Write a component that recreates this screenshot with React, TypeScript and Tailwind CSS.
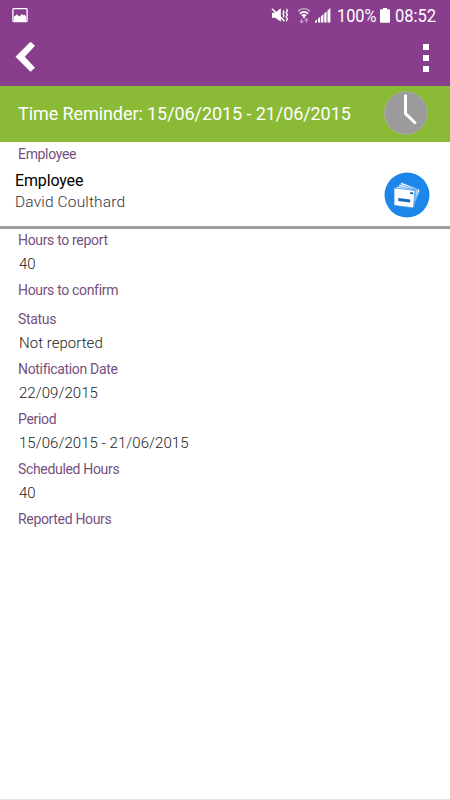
interface Field {
  label: string;
  value?: string;
}

const fields: Field[] = [
  { label: "Hours to report", value: "40" },
  { label: "Hours to confirm" },
  { label: "Status", value: "Not reported" },
  { label: "Notification Date", value: "22/09/2015" },
  { label: "Period", value: "15/06/2015 - 21/06/2015" },
  { label: "Scheduled Hours", value: "40" },
  { label: "Reported Hours" },
];

function StatusBar() {
  return (
    <div className="flex h-8 items-center text-white">
      <svg className="ml-3 h-4 w-4" viewBox="0 0 16 16" fill="none">
        <rect x=".9" y=".7" width="14.2" height="12.8" rx="0.8" stroke="currentColor" strokeWidth="1.3" />
        <path d="M2 8.5 3.6 7.5l1.2-1.2 2.4 2.2L10.4 6l1.2 1.4 1.1-.6L14 8.5V13H2z" fill="currentColor" />
      </svg>
      <svg className="ml-[243px] h-4 w-[18px]" viewBox="0 0 18 16" fill="none" stroke="currentColor">
        <path d="M1 4.7h3.2L9.8.3v13.4l-5.6-4H1z" fill="currentColor" stroke="none" />
        <path d="M1 .8 13.5 13.3" strokeWidth="1.6" />
        <path d="m12 2.3 1 1.7-1 1.9 1 1.9-1 1.7M15.5.8l1 2-1.4 2 1.4 2-1.4 2 1.4 2-1.2 2.5" strokeWidth="1.3" />
      </svg>
      <svg className="ml-2 h-4 w-[14px]" viewBox="0 0 14 16" fill="none" stroke="currentColor">
        <path d="M1 3.2C4.6.1 9.4.1 13 3.2" strokeWidth="1.3" opacity=".65" />
        <path d="M2.8 5.7c2.6-2.2 5.8-2.2 8.4 0M4.8 7.8c1.4-1.1 3-1.1 4.4 0" strokeWidth="1.6" />
        <circle cx="7" cy="9.2" r="1.1" fill="currentColor" stroke="none" />
        <path d="M4.6 14.7v-4M2.8 12.8l1.8 1.9 1.8-1.9M9.4 14.7v-4M7.6 12.6l1.8-1.9 1.8 1.9" strokeWidth="1.2" opacity=".5" />
      </svg>
      <svg className="ml-[4px] h-4 w-4" viewBox="0 0 16 16" fill="currentColor">
        <path d="M0 14.5V13l2-1.5v3zM3 14.5v-4l2.2-1.6v5.6zM6 14.5V8.2l2.4-1.9v8.2zM9.2 14.5v-9l2.4-1.9v10.9zM12.5 14.5V2.4L15.4.1v14.4z" />
      </svg>
      <span className="ml-[6px] w-[41px] origin-left scale-x-[.86] whitespace-nowrap text-[19px] leading-8">
        100%
      </span>
      <svg className="ml-[2px] h-4 w-[10px]" viewBox="0 0 10 16" fill="currentColor">
        <path d="M3 0h4v1.3h2.2q.8 0 .8.8V14q0 .8-.8.8H.8Q0 14.800 0 14V2.100q0-.8.8-.8H3z" />
      </svg>
      <span className="ml-[5px] w-[42px] origin-left scale-x-[.87] whitespace-nowrap text-[19px] leading-8">
        08:52
      </span>
    </div>
  );
}

function Toolbar() {
  return (
    <div className="flex h-[54px] items-start justify-between pr-[21px] pl-[15px] text-white">
      <svg className="mt-[9px] h-8 w-[21px]" viewBox="0 0 21 32" fill="currentColor">
        <path d="m15.5.8 4.5 4L9.8 15.7 20 26.8l-4.5 4L.5 15.7z" />
      </svg>
      <div className="mt-3 flex flex-col gap-[5px]">
        <span className="h-[6px] w-[6px] bg-white" />
        <span className="h-[6px] w-[6px] bg-white" />
        <span className="h-[6px] w-[6px] bg-white" />
      </div>
    </div>
  );
}

function ClockIcon() {
  return (
    <svg className="mb-[2px] h-11 w-11" viewBox="0 0 44 44" fill="none">
      <circle cx="21.8" cy="22" r="21.3" fill="#9b9b9b" stroke="#a9ad9e" />
      <path d="M21.5 3.5v19.2l10.3 9.8" stroke="#fff" strokeWidth="3" />
    </svg>
  );
}

function CardsIcon() {
  return (
    <svg className="h-[46px] w-[46px]" viewBox="0 0 46 46">
      <circle cx="23" cy="23" r="22.5" fill="#1d87e9" />
      <g fill="#fff" stroke="#1d87e9" strokeWidth=".7">
        <path d="m17 10.2 19 7.5-5.5 15.6-18.5-7z" />
        <path d="m15 12.3 18.8 5.6-3.3 16.2-18.5-5z" />
        <path d="m12.5 14.2 19.5 4-2 16.2-18.5-4z" />
        <path d="m10 15.8 21 2.7-1.5 17.4-19.5-2.5z" />
      </g>
      <path d="m26.2 20 3 .4v1.9l-3-.4zM14.3 26l11.9 1.5v3.1l-11.9-1.5z" fill="#1269b8" />
    </svg>
  );
}

export default function App() {
  return (
    <div className="flex h-[800px] w-[450px] flex-col overflow-hidden border-b border-[#e2e2e2] bg-white font-['Roboto',sans-serif]">
      <header className="shrink-0 bg-[#883e8d]">
        <StatusBar />
        <Toolbar />
      </header>

      <div className="flex h-14 shrink-0 items-center justify-between bg-[#8bbb36] pr-[22px] pl-[18px]">
        <h1 className="pb-[2px] text-[18px] font-normal tracking-[-0.08px] text-white">
          Time Reminder: 15/06/2015 - 21/06/2015
        </h1>
        <ClockIcon />
      </div>

      {/* Employee */}
      <section className="h-[87px] shrink-0 border-b-[3px] border-[#9c9f9c]">
        <p className="pl-[18px] text-[14px] leading-6 tracking-[-0.33px] text-[#765080]">Employee</p>
        <div className="flex justify-between pr-5 pl-[15px]">
          <div className="pt-1">
            <p className="text-[16px] leading-[22px] tracking-[-0.15px] text-black">Employee</p>
            <p className="text-[15.5px] leading-[21px] font-light tracking-[0.15px] text-[#333]">
              David Coulthard
            </p>
          </div>
          <div className="pt-[6px]">
            <CardsIcon />
          </div>
        </div>
      </section>

      {/* Report details */}
      <dl className="-mt-px pl-[18px]">
        {fields.map((field) => (
          <div key={field.label} className={field.value ? "h-[50px]" : "h-[29px]"}>
            <dt className="text-[14px] leading-6 tracking-[-0.33px] text-[#765080]">{field.label}</dt>
            {field.value && (
              <dd className="pl-px text-[15px] leading-[25px] font-light tracking-[0.04px] text-[#222]">
                {field.value}
              </dd>
            )}
          </div>
        ))}
      </dl>
    </div>
  );
}
